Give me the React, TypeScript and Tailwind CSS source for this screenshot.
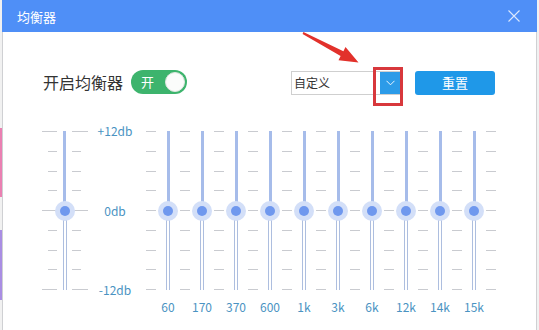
import React from "react";

const FONT = { fontFamily: '"Noto Sans CJK SC", "Noto Sans", sans-serif' };

function TickCol({ w, variant }: { w: string; variant: "left" | "right" | "mid" }) {
  const items = Array.from({ length: 9 });
  return (
    <div className={`${w} h-[159px] flex flex-col justify-between`}>
      {items.map((_, i) => {
        const long = i === 0 || i === 4 || i === 8;
        let cls = "w-full";
        if (variant === "left" && !long) cls = "w-[9px] self-end";
        if (variant === "right" && !long) cls = "w-[9px] self-start";
        return <div key={i} className={`${cls} h-px bg-[#c9cbd0]`} />;
      })}
    </div>
  );
}

function Slider({ w, label }: { w: string; label?: string }) {
  return (
    <div className={`${w} flex flex-col items-center`}>
      <div className="relative h-[159px] w-full flex flex-col items-center">
        <div className="w-[3px] h-[80px] bg-[#a6bcea]" />
        <div className="w-[4px] flex-1 border-x border-[#adbedf]" />
        <div className="absolute left-1/2 top-[80px] -translate-x-1/2 -translate-y-1/2 w-[20px] h-[20px] rounded-full bg-[#d3dff8] flex items-center justify-center">
          <div className="w-[10px] h-[10px] rounded-full bg-[#6f98ee]" />
        </div>
      </div>
      {label !== undefined && (
        <div className="mt-[10px] w-full flex justify-center whitespace-nowrap text-[12px] leading-[14px] text-[#4a93c2]">
          {label}
        </div>
      )}
    </div>
  );
}

export default function App() {
  const freqs = ["60", "170", "370", "600", "1k", "3k", "6k", "12k", "14k", "15k"];
  return (
    <div className="relative w-[539px] h-[330px] overflow-hidden bg-[#f1f1f1] flex" style={FONT}>
      {/* background page strip */}
      <div className="w-[2px] h-full flex flex-col">
        <div className="h-[128px]" />
        <div className="h-[69px] bg-[#ea80b2]" />
        <div className="h-[33px]" />
        <div className="h-[70px] bg-[#a98de3]" />
      </div>

      {/* window */}
      <div className="w-[535px] h-full flex flex-col bg-white">
        <div className="h-[32px] bg-[#4f8ff7] flex items-center justify-between pl-[15px] pr-[17px]">
          <span className="text-white text-[13px] leading-none">均衡器</span>
          <svg width="12" height="12" viewBox="0 0 12 12">
            <path d="M0.5 0.5 L11.5 11.5 M11.5 0.5 L0.5 11.5" stroke="#dce8fd" strokeWidth="1.1" />
          </svg>
        </div>
        <div className="flex-1 border-x border-[#cfd0d3] flex flex-col">
          {/* control row */}
          <div className="mt-[37px] h-[25px] pl-[40px] flex items-center">
            <span className="text-[16px] leading-none text-[#333]">开启均衡器</span>
            <div className="ml-[8px] w-[56px] h-[24px] rounded-full bg-[#3db46d] flex items-center pl-[10px] pr-[2px]">
              <span className="text-white text-[13px] leading-none">开</span>
              <div className="ml-auto w-[20px] h-[20px] rounded-full bg-[#fbfcfb] border border-[#dfe6df]" />
            </div>
            <div className="ml-[104px] w-[111px] h-[24px] border border-[#cfcfcf] flex items-stretch mt-[2px]">
              <span className="flex-1 text-[12px] leading-[22px] pl-[2px] text-[#333]">自定义</span>
              <div className="w-[21px] bg-[#2c9be8] flex items-center justify-center">
                <svg width="9" height="6" viewBox="0 0 9 6">
                  <path d="M0.5 0.8 L4.5 4.8 L8.5 0.8" stroke="#e8f4fd" strokeWidth="1" fill="none" />
                </svg>
              </div>
            </div>
            <div className="ml-[13px] mt-[2px] w-[80px] h-[24px] rounded-[3px] bg-[#1f98e8] flex items-center justify-center">
              <span className="text-white text-[13px] leading-none">重置</span>
            </div>
          </div>

          {/* sliders */}
          <div className="mt-[37px] pl-[39px] flex items-start">
            <TickCol w="w-[15px]" variant="left" />
            <Slider w="w-[15px]" />
            <TickCol w="w-[16px]" variant="right" />
            <div className="w-[54px] h-[173px] -mt-[7px] flex flex-col justify-between items-center text-[12px] leading-[14px] text-[#4a93c2]">
              <span>+12db</span>
              <span>0db</span>
              <span>-12db</span>
            </div>
            <div className="ml-[4px] flex items-start">
              {freqs.map((f) => (
                <React.Fragment key={f}>
                  <TickCol w="w-[10px]" variant="mid" />
                  <Slider w="w-[24px]" label={f} />
                </React.Fragment>
              ))}
              <TickCol w="w-[10px]" variant="mid" />
            </div>
          </div>
        </div>
      </div>

      {/* annotation overlays */}
      <svg className="absolute left-0 top-0 pointer-events-none" width="539" height="330">
        <polygon
          points="303.4,32.0 343.4,51.2 345.5,47.0 358.5,62.5 338.5,60.2 340.6,56.0 302.6,34.0"
          fill="#e2312b"
        />
      </svg>
      <div className="absolute left-[373px] top-[67px] w-[30px] h-[39px] border-[3px] border-[#d8383c] pointer-events-none" />
    </div>
  );
}
